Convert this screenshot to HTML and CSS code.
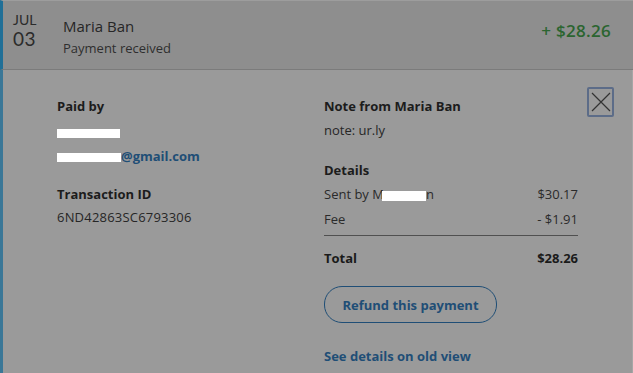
FILE: index.html
```html
<!DOCTYPE html>
<html lang="en">
<head>
  <meta charset="UTF-8">
  <title>Activity - Payment received</title>
  <link rel="stylesheet" href="styles.css">
</head>
<body>

  <div class="activity">
    <div class="activity-header">
      <div class="activity-date">
        <span class="month">JUL</span>
        <span class="day">03</span>
      </div>
      <div class="activity-info">
        <div class="name">Maria Ban</div>
        <div class="status">Payment received</div>
      </div>
      <div class="activity-amount">+ $28.26</div>
    </div>

    <div class="activity-details">
      <button class="close-btn" aria-label="Close">
        <svg width="22" height="22" viewBox="0 0 22 22">
          <path d="M2 2 L20 20 M20 2 L2 20" stroke="#333" stroke-width="1.2" fill="none"/>
        </svg>
      </button>

      <div class="details-col left-col">
        <div class="label">Paid by</div>
        <div class="value"><span class="redact redact-name"></span></div>
        <div class="value email"><span class="redact redact-email"></span>@gmail.com</div>

        <div class="label spaced">Transaction ID</div>
        <div class="value">6ND42863SC6793306</div>
      </div>

      <div class="details-col right-col">
        <div class="label">Note from Maria Ban</div>
        <div class="value">note: ur.ly</div>

        <div class="label spaced">Details</div>
        <div class="row">
          <span>Sent by M<span class="redact redact-sender"></span>n</span>
          <span>$30.17</span>
        </div>
        <div class="row fee">
          <span>Fee</span>
          <span>- $1.91</span>
        </div>
        <div class="row total">
          <span>Total</span>
          <span>$28.26</span>
        </div>

        <button class="refund-btn">Refund this payment</button>

        <a class="old-view" href="#">See details on old view</a>
      </div>
    </div>
  </div>

</body>
</html>
```

FILE: styles.css
```css
/* General Styles */
body {
  margin: 0;
  padding: 0;
  font-family: 'Open Sans', sans-serif;
  background-color: #9a9a9a;
  color: #262626;
}

.activity {
  width: 633px;
  height: 373px;
  overflow: hidden;
}

/* Header row */
.activity-header {
  display: flex;
  align-items: flex-start;
  height: 68px;
  background-color: #8e8e8e;
  border-top: 1px solid #9d9d9d;
  border-left: 3px solid #206f97;
  border-bottom: 1px solid #7b7b7b;
}

.activity-date {
  display: flex;
  flex-direction: column;
  width: 50px;
  padding: 11px 0 0 10px;
  font-family: 'Lato', sans-serif;
  color: #2b2b2b;
}

.activity-date .month {
  font-size: 14px;
  line-height: 16px;
}

.activity-date .day {
  font-size: 19px;
  line-height: 22px;
  letter-spacing: 0.5px;
}

.activity-info {
  flex: 1;
  padding-top: 15px;
}

.activity-info .name {
  font-size: 15px;
  line-height: 20px;
  color: #262626;
}

.activity-info .status {
  font-size: 13px;
  line-height: 20px;
  margin-top: 2px;
  color: #2e2e2e;
}

.activity-amount {
  padding: 18px 22px 0 0;
  font-size: 17px;
  font-weight: 600;
  letter-spacing: 0.3px;
  color: #2b6530;
}

/* Details panel */
.activity-details {
  position: relative;
  display: flex;
  height: 303px;
  padding: 26px 0 0 54px;
  border-left: 3px solid #3a7797;
  border-right: 1px solid #a6a6a6;
  box-sizing: border-box;
  font-size: 13px;
  line-height: 20px;
}

.details-col {
  display: flex;
  flex-direction: column;
}

.left-col {
  width: 267px;
}

.right-col {
  width: 254px;
}

.label {
  font-weight: 700;
  color: #1c1c1c;
}

.label.spaced {
  margin-top: 20px;
}

.value {
  margin-top: 4px;
  color: #262626;
}

.left-col .value {
  margin-top: 6px;
}

.left-col .value.email {
  margin-top: 4px;
  color: #1f4e76;
  font-weight: 700;
}

.left-col .label.spaced {
  margin-top: 18px;
}

.left-col .label.spaced + .value {
  margin-top: 3px;
  letter-spacing: 0.2px;
}

.redact {
  display: inline-block;
  background-color: #fff;
  vertical-align: middle;
}

.redact-name {
  width: 63px;
  height: 9px;
}

.redact-email {
  width: 64px;
  height: 9px;
}

.redact-sender {
  width: 44px;
  height: 10px;
  margin-left: -2px;
}

.row {
  display: flex;
  justify-content: space-between;
  margin-top: 4px;
  color: #2a2a2a;
}

.row.fee {
  margin-top: 5px;
  padding-bottom: 6px;
  border-bottom: 1px solid #505050;
}

.row.total {
  margin-top: 12px;
  font-weight: 700;
  color: #1a1a1a;
}

.refund-btn {
  align-self: flex-start;
  margin-top: 18px;
  width: 173px;
  height: 37px;
  border: 1px solid #1f4e76;
  border-radius: 18px;
  background: transparent;
  font-family: 'Open Sans', sans-serif;
  font-size: 13px;
  font-weight: 700;
  color: #1f4e76;
  cursor: pointer;
}

.old-view {
  margin-top: 23px;
  font-weight: 700;
  color: #1f4e76;
  text-decoration: none;
}

.old-view:hover {
  text-decoration: underline;
}

.close-btn {
  position: absolute;
  top: 17px;
  right: 18px;
  width: 27px;
  height: 30px;
  padding: 0;
  display: flex;
  align-items: center;
  justify-content: center;
  background: transparent;
  border: 2px solid #5c6c88;
  border-radius: 2px;
  cursor: pointer;
}
```
